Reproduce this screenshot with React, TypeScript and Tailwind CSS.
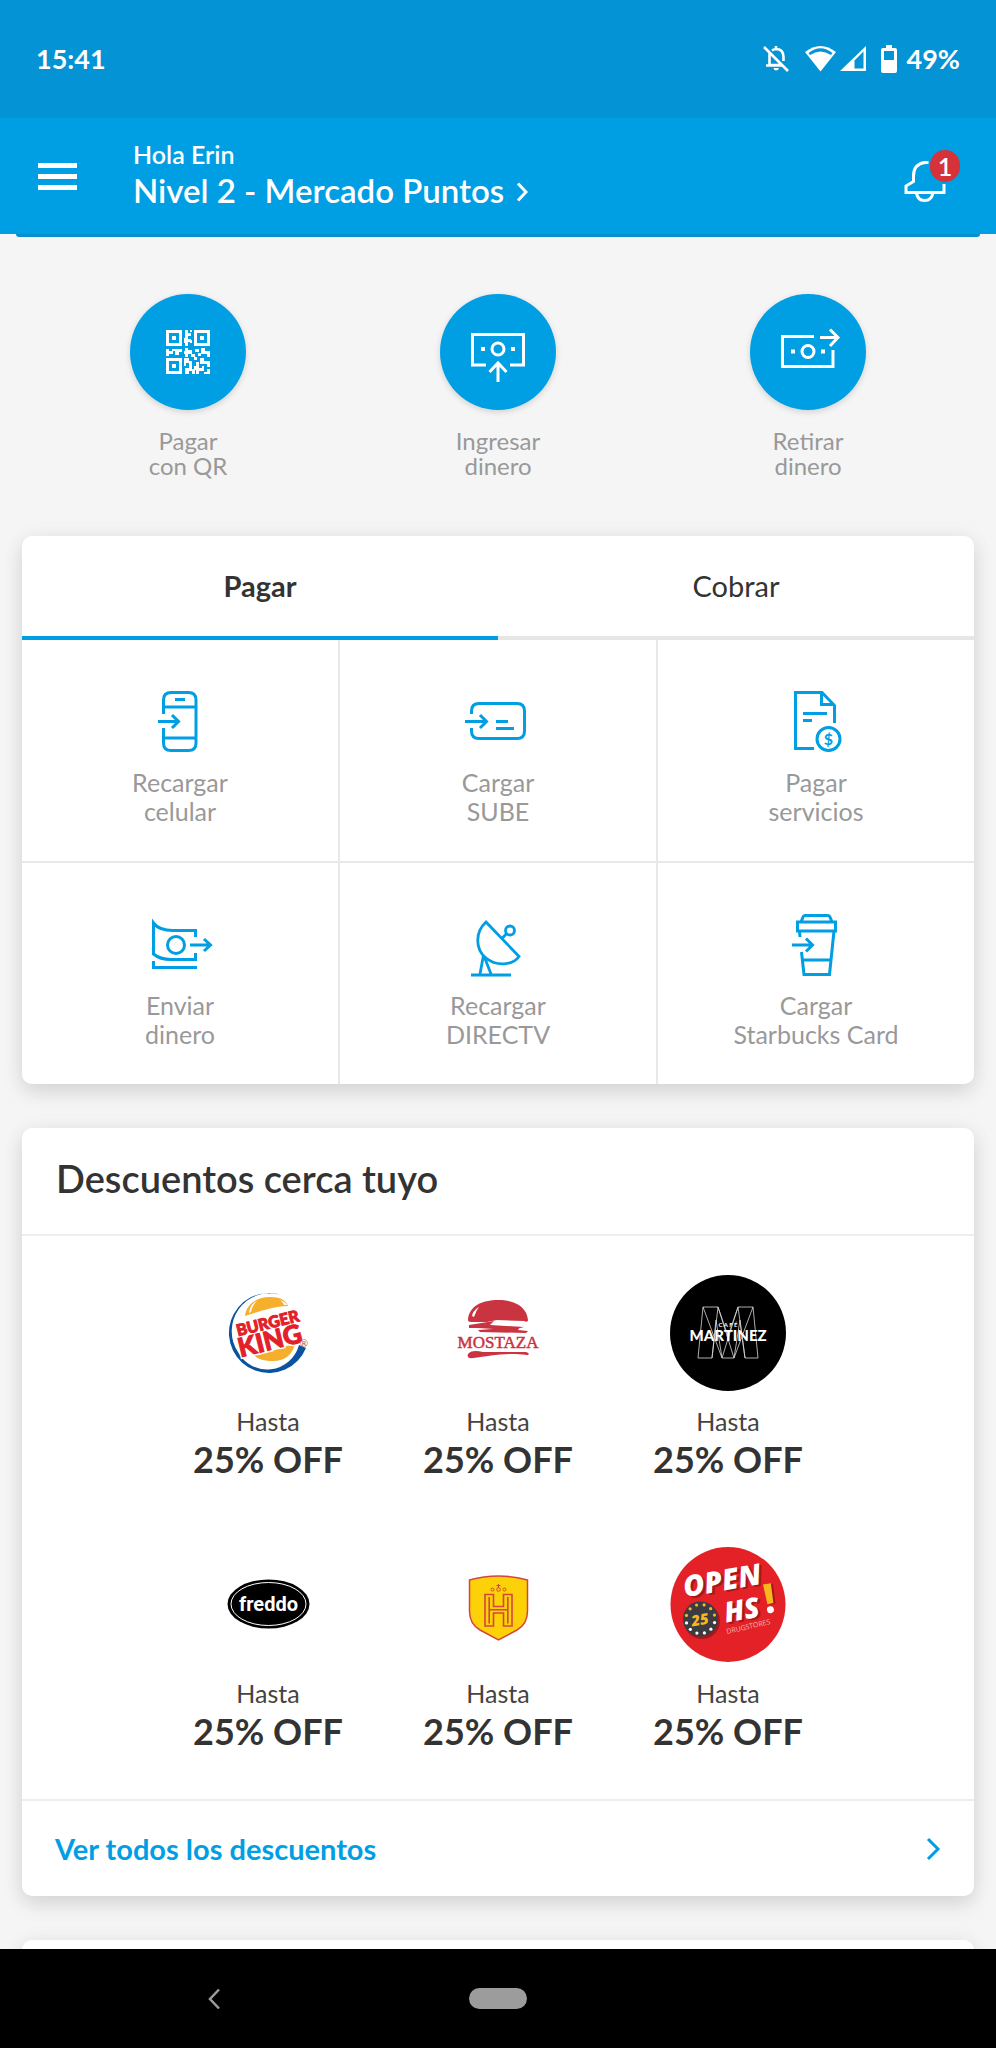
import { useState } from "react";
import type { ReactNode } from "react";

const QrIcon = () => (
    <svg width="64" height="64" viewBox="0 0 64 64" fill="currentColor">
        {[[10, 10], [38, 10], [10, 38]].map(([x, y]) => (
            <g key={`${x}-${y}`}>
                <rect x={x + 1.5} y={y + 1.5} width="13" height="13" fill="none" stroke="currentColor" strokeWidth="3" />
                <rect x={x + 6} y={y + 6} width="4" height="4" />
            </g>
        ))}
        <path d="M29 10h3v3h3v3h-3v3h3v3h-3v4h-3v-3h-1v-5h1zM34 10h2v2h-2zM34 20h2v3h-2zM10 29h3v2h3v-2h3v2h-2v3h-4v2h-3zM19 29h7v3h-3v3h-4v-3zM29 28h3v2h4v4h3v3h-4v-3h-3v3h-3v-3h-1v-3h1zM39 29h4v3h-4zM45 28h4v3h5v6h-3v-3h-6zM42 33h3v3h-3zM28 38h5v3h3v4h-3v-2h-3v3h-2zM38 37h3v3h-3zM44 38h4v3h6v6h-3v-3h-7zM29 48h4v-3h3v4h3v5h-3v-3h-3v3h-4zM40 42h3v4h5v5h-5v3h-3v-4h-2v-4h2zM51 49h3v5h-6v-2h3z" />
        <rect x="43" y="45" width="3" height="3" fill="#009ee3" />
    </svg>
);

const DepositIcon = () => (
    <svg width="64" height="64" viewBox="0 0 64 64" fill="none" stroke="currentColor" strokeWidth="3">
        <path d="M20 45H6.500V14.500H57.500V45H44M32 62V44M23.500 52L32 43L40.500 52" />
        <circle cx="32" cy="29" r="6" />
        <path d="M15 29h4M45 29h4" strokeWidth="4" />
    </svg>
);

const WithdrawIcon = () => (
    <svg width="64" height="64" viewBox="0 0 64 64" fill="none" stroke="currentColor" strokeWidth="3">
        <path d="M38 16.500H6.500V46.500H57V30M44 17.500H62M54 9.500L62 17.500L54 26" />
        <circle cx="32" cy="31.500" r="6" />
        <path d="M15 31.500h4M45 31.500h4" strokeWidth="4" />
    </svg>
);

const LineIcon = ({ children }: { children: ReactNode }) => (
    <svg width="64" height="64" viewBox="0 0 64 64" fill="none" stroke="currentColor" strokeWidth="3" className="overflow-visible text-[#009ee3]">
        {children}
    </svg>
);

const quickActions = [
    { icon: QrIcon, lines: ["Pagar", "con QR"] },
    { icon: DepositIcon, lines: ["Ingresar", "dinero"] },
    { icon: WithdrawIcon, lines: ["Retirar", "dinero"] },
];

const services = [
    {
        lines: ["Recargar", "celular"],
        icon: (
            <LineIcon>
                <path d="M15.500 24V10Q15.500 2.500 23 2.500H40.500Q48 2.500 48 10V53Q48 60.500 40.500 60.500H23Q15.500 60.500 15.500 53V38M15.500 17H48M15.500 48H48M27 9.500H37M10 31.500H30M24 25L30.500 31.500L24 38" />
            </LineIcon>
        ),
    },
    {
        lines: ["Cargar", "SUBE"],
        icon: (
            <LineIcon>
                <path d="M5.500 24V21Q5.500 13.500 13 13.500H51Q58.500 13.500 58.500 21V41Q58.500 48.500 51 48.500H13Q5.500 48.500 5.500 41V38M-1 31.500H20M14 25L20.500 31.500L14 38M30 31.500H42M30 38.500H48" />
            </LineIcon>
        ),
    },
    {
        lines: ["Pagar", "servicios"],
        icon: (
            <LineIcon>
                <path d="M50.500 33V15.500L38 2.500H11.500V58.500H30M37.500 3V14.500H50M19 23.500H43M19 30.500H28" />
                <circle cx="44.500" cy="49" r="11.500" />
                <text x="44.500" y="55" textAnchor="middle" fontSize="16" fontWeight="700" fill="currentColor" stroke="none">$</text>
            </LineIcon>
        ),
    },
    {
        lines: ["Enviar", "dinero"],
        icon: (
            <LineIcon>
                <path d="M47.500 24V17.500H25Q11 17.500 5.500 10V41Q12 46.500 23 46.500H47.500V40M5.500 48V54.500H49M42 32H62M56 26L62.500 32L56 38" />
                <circle cx="28" cy="32" r="8.500" />
            </LineIcon>
        ),
    },
    {
        lines: ["Recargar", "DIRECTV"],
        icon: (
            <LineIcon>
                <path strokeWidth="2.800" d="M20 9C9 19 9 36 20 45C31 54 47 52 53 43.500ZM36.500 25L41 20M17.500 42L14 61M18 43L25 61M5 62H45" />
                <circle cx="44" cy="17.500" r="4.500" strokeWidth="2.800" />
            </LineIcon>
        ),
    },
    {
        lines: ["Cargar", "Starbucks Card"],
        icon: (
            <LineIcon>
                <path d="M17 9L19 4Q19.500 2.500 21 2.500H44Q45.500 2.500 46 4L48 9M13.500 9H51.500V18H13.500ZM15.500 18L16 24M17.500 39L20 61.500H45.500L50 18M18 47H48M8 32H28M22 25.500L28.500 32L22 38.500" />
            </LineIcon>
        ),
    },
];

const BurgerKingLogo = () => (
    <svg width="116" height="116" viewBox="0 0 116 116">
        <path d="M70 19.500A40 40 0 1 0 96 73L89 70A33 33 0 0 1 28 77A38 38 0 0 1 70 19.500Z" fill="#0a53a1" />
        <path d="M35 41C36 29 47 22 60 22C70 22 76 25 78 31C66 31 50 36 35 41Z" fill="#f6ae2d" />
        <path d="M43 79C57 78 73 74 85 67C84 79 75 86 63 86C54 86 47 84 43 79Z" fill="#f6ae2d" />
        <path d="M39 38C40 31 43 28 47 26C42 31 42 34 41 37ZM70 25C74 26 76 28 77 30L74 30C73 28 72 26 70 25Z" fill="#fff" />
        <g transform="rotate(-14 58 58)" fontFamily="Lato, sans-serif" fontWeight="900" textAnchor="middle" fill="#e3202a">
            <g stroke="#fff" strokeWidth="4">
                <text x="60" y="54" fontSize="16" aria-hidden="true">BURGER</text>
                <text x="58" y="75" fontSize="26" aria-hidden="true">KING</text>
            </g>
            <g stroke="#e3202a" strokeWidth="1">
                <text x="60" y="54" fontSize="16">BURGER</text>
                <text x="58" y="75" fontSize="26">KING</text>
            </g>
        </g>
        <text x="94" y="72" textAnchor="middle" fontSize="10" fill="#93605f">®</text>
    </svg>
);

const MostazaLogo = () => (
    <svg width="116" height="116" viewBox="0 0 116 116" fill="#c93440">
        <path d="M28 45C29 31 42 25 58 25C75 25 87 32 88 45C88 47 86 47 84 46L57 45L47 47L31 47C29 47 28 46 28 45Z" />
        <path d="M29 50L54 46L50 50L84 52L72 55L38 53L29 53ZM38 55L80 52L78 55L88 56L86 58L40 57Z" />
        <path d="M28 79C32 75 37 76 43 77L86 77C90 78 89 80 87 80C65 77 50 81 33 83C28 84 27 81 28 79Z" />
        <path d="M32 41C33 36 36 34 39 32C36 36 36 38 34 42Z" fill="#fff" />
        <text x="58" y="73" textAnchor="middle" fontFamily="Liberation Serif, serif" fontSize="17" stroke="#c93440" strokeWidth="0.500">MOSTAZA</text>
    </svg>
);

const MartinezLogo = () => (
    <svg width="116" height="116" viewBox="0 0 116 116">
        <circle cx="58" cy="58" r="58" />
        <path d="M33 32H48L58 61L68 32H83L88 83H75L70 45L64 83H52L46 45L42 83H28ZM33 32L52 83M48 32L42 83M48 32L64 83M68 32L52 83M68 32L75 83M83 32L64 83" fill="none" stroke="#d8d8d8" strokeWidth="0.800" />
        <text x="58" y="52" textAnchor="middle" fontFamily="Lato, sans-serif" fontWeight="700" fontSize="6" fill="#fff">C A F É</text>
        <text x="58" y="66" textAnchor="middle" fontFamily="Lato, sans-serif" fontWeight="900" fontSize="15" fill="#fff">MARTINEZ</text>
    </svg>
);

const FreddoLogo = () => (
    <svg width="116" height="116" viewBox="0 0 116 116">
        <ellipse cx="58.500" cy="57" rx="41" ry="24.500" />
        <ellipse cx="58.500" cy="57" rx="37.500" ry="21.500" fill="none" stroke="#fff" strokeWidth="1" />
        <text x="58.500" y="64" textAnchor="middle" fontFamily="Roboto, sans-serif" fontWeight="700" fontSize="20" fill="#fff">freddo</text>
    </svg>
);

const ShieldLogo = () => (
    <svg width="116" height="116" viewBox="0 0 116 116" fill="none" stroke="#d5453f">
        <path d="M29.500 33Q44 29 58.500 29Q73 29 87.500 33V64Q87.500 77 77 83L58.500 93L40 83Q29.500 77 29.500 64Z" fill="#fdd108" strokeWidth="1.500" />
        <path d="M45 47.500H53.500V59.500H63.500V47.500H72V79H63.500V66H53.500V79H45Z" strokeWidth="1.600" />
        <path d="M49.200 50V76.500M67.800 50V76.500M49.200 62.800H67.800" strokeWidth="1.600" />
        <circle cx="52.500" cy="42.500" r="1.500" />
        <circle cx="58.500" cy="42.500" r="1.800" />
        <circle cx="64.500" cy="42.500" r="1.500" />
        <path d="M58.500 37V41M56.500 38.500H60.500" />
    </svg>
);

const OpenLogo = () => (
    <svg width="116" height="116" viewBox="0 0 116 116" fontFamily="Open Sans, Lato, sans-serif">
        <circle cx="58" cy="57.500" r="57.500" fill="#e32126" />
        <circle cx="32" cy="74" r="18" fill="#a5181c" />
        <circle cx="30.500" cy="72" r="17.500" fill="#3b3c42" />
        {Array.from({ length: 12 }, (_, i) => {
            const angle = (i * Math.PI) / 6 + 0.25;
            return (
                <circle
                    key={i}
                    cx={30.5 + 14.5 * Math.cos(angle)}
                    cy={72 + 14.5 * Math.sin(angle)}
                    r="1.600"
                    fill={i < 6 ? "#fff" : "#f5b52a"}
                />
            );
        })}
        <g transform="rotate(-10 58 58)" fontWeight="800" fontStyle="italic">
            <g fill="#a5181c" aria-hidden="true">
                <text x="19" y="45" fontSize="29">OPEN</text>
                <text x="55" y="77" fontSize="28">HS</text>
                <path d="M98 45H106L105 65H99Z" />
            </g>
            <g fill="#fff">
                <text x="17" y="43" fontSize="29">OPEN</text>
                <text x="53" y="75" fontSize="28">HS</text>
                <path d="M96 44H104L103 64H97Z" fill="#f8b81c" />
                <circle cx="99" cy="70" r="3.500" />
            </g>
            <text x="19" y="73" fontSize="15" fill="#f8b81c">25</text>
        </g>
        <text x="57" y="87" fontSize="7" fill="#f2b9b5" transform="rotate(-13 57 87)">DRUGSTORES</text>
    </svg>
);

const discounts = [
    { name: "Burger King", logo: BurgerKingLogo },
    { name: "Mostaza", logo: MostazaLogo },
    { name: "Café Martínez", logo: MartinezLogo },
    { name: "Freddo", logo: FreddoLogo },
    { name: "Havanna", logo: ShieldLogo },
    { name: "Open 25 HS", logo: OpenLogo },
];

const cardClass = "mx-[22px] overflow-hidden rounded-[10px] bg-white shadow-[0_8px_20px_rgba(0,0,0,0.12),0_0_24px_rgba(0,0,0,0.04)]";

const StatusBar = () => (
    <div className="flex h-[118px] shrink-0 items-center justify-between bg-[#0493d5] px-9 text-[27px] font-bold text-white">
        <span>15:41</span>
        <div className="flex items-center">
            <svg width="26" height="28" viewBox="0 0 26 28" fill="none" stroke="currentColor" strokeWidth="2.600" className="mr-4">
                <path d="M1 2L25 26M6.500 8.500V20H19M3 20.500H20M9 5.500Q11 4 13.500 4Q20.500 4.500 20.500 12V16M13 1V4" />
                <path d="M10.500 23H16Q15.500 25.500 13 25.500Q11 25.500 10.500 23Z" fill="currentColor" stroke="none" />
            </svg>
            <svg width="31" height="28" viewBox="0 0 31 28" className="mr-1">
                <path d="M0 7Q15.500 -5 31 7L15.500 26.500Z" fill="currentColor" />
                <path d="M3.500 8Q15.500 -1.500 27.500 8L26 10Q15.500 3 5 10Z" fill="#0493d5" />
            </svg>
            <svg width="26" height="28" viewBox="0 0 26 28" className="mr-[15px]">
                <path d="M0 26L26 1V26Z" fill="currentColor" />
                <path d="M14.500 15.500L23.500 6.500V23.500H14.500Z" fill="#0493d5" />
            </svg>
            <svg width="16" height="28" viewBox="0 0 16 28" className="mr-[10px]">
                <path d="M5 0H11V3H14Q16 3 16 5V26Q16 28 14 28H2Q0 28 0 26V5Q0 3 2 3H5Z" fill="currentColor" />
                <path d="M3 6H13V15H3Z" fill="#0493d5" />
            </svg>
            <span>49%</span>
        </div>
    </div>
);

const Header = () => (
    <header className="shrink-0 text-white">
        <div className="flex h-[116px] items-center bg-[#009ee3] pr-9 pl-[38px]">
            <button type="button" aria-label="Menú" className="mr-14 flex w-[39px] flex-col gap-1.5">
                <span className="h-[5px] w-full bg-white" />
                <span className="h-[5px] w-full bg-white" />
                <span className="h-[5px] w-full bg-white" />
            </button>
            <a href="#puntos" className="flex flex-col gap-0.5 pb-0.5 font-semibold">
                <span className="text-[25px] leading-7">Hola Erin</span>
                <span className="flex items-center gap-3 text-[33px] leading-10">
                    Nivel 2 - Mercado Puntos
                    <svg width="12" height="20" viewBox="0 0 12 20" fill="none" stroke="currentColor" strokeWidth="3" className="mt-1">
                        <path d="M2 1.500L10 10L2 18.500" />
                    </svg>
                </span>
            </a>
            <button type="button" aria-label="Notificaciones" className="relative ml-auto h-[52px] w-14">
                <svg width="42" height="52" viewBox="0 0 42 52" fill="none" stroke="currentColor" strokeWidth="3">
                    <path d="M24.500 12.500H21Q9.500 14 9.500 26V31.500L2 36V42.500H40V34M12.500 43Q13.500 50.500 20.500 50.500Q27.500 50.500 29 43" />
                </svg>
                <span className="absolute top-0 right-0 flex h-8 w-[30px] items-center justify-center rounded-full bg-[#d5323a] text-[25px] leading-7 font-semibold">1</span>
            </button>
        </div>
        <div className="mx-4 h-[3px] rounded-b-full bg-[#088fd0]" />
    </header>
);

export default function App() {
    const [tab, setTab] = useState("Pagar");

    return (
        <div className="flex h-screen flex-col bg-[#f5f5f5] font-['Lato',sans-serif] text-[#333]">
            <StatusBar />
            <Header />

            <main className="flex-1 overflow-hidden">
                <nav className="grid grid-cols-3 px-[33px] pt-[57px] pb-[58px]">
                    {quickActions.map((action) => (
                        <button key={action.lines.join(" ")} type="button" className="flex flex-col items-center text-2xl leading-[25px] text-[#999]">
                            <span className="mb-[18px] flex h-[116px] w-[116px] items-center justify-center rounded-full bg-[#009ee3] text-white shadow-[0_2px_6px_rgba(0,0,0,0.15)]">
                                <action.icon />
                            </span>
                            {action.lines.map((line) => (
                                <span key={line}>{line}</span>
                            ))}
                        </button>
                    ))}
                </nav>

                <section className={cardClass}>
                    <div role="tablist" className="grid grid-cols-2">
                        {["Pagar", "Cobrar"].map((name) => (
                            <button
                                key={name}
                                type="button"
                                role="tab"
                                aria-selected={tab === name}
                                onClick={() => setTab(name)}
                                className={`h-[104px] border-b-4 text-[29px] ${tab === name ? "border-[#009ee3] font-bold" : "border-[#e6e6e6]"}`}
                            >
                                {name}
                            </button>
                        ))}
                    </div>
                    <div className="grid grid-cols-3 gap-0.5 bg-[#e8e8e8]">
                        {services.map((service) => (
                            <button
                                key={service.lines.join(" ")}
                                type="button"
                                className="flex h-[221px] flex-col items-center bg-white pt-[50px] text-[25px] leading-[29px] text-[#999]"
                            >
                                <span className="mb-3.5">{service.icon}</span>
                                {service.lines.map((line) => (
                                    <span key={line}>{line}</span>
                                ))}
                            </button>
                        ))}
                    </div>
                </section>

                <section className={`mt-11 ${cardClass}`}>
                    <h2 className="flex h-[108px] items-center border-b-2 border-[#eee] px-[34px] pb-1.5 text-[38px] font-semibold">
                        Descuentos cerca tuyo
                    </h2>
                    <ul className="mx-auto grid max-w-[690px] grid-cols-3 gap-y-[68px] pt-[39px] pb-12">
                        {discounts.map((item) => (
                            <li key={item.name} className="flex flex-col items-center" aria-label={item.name}>
                                <item.logo />
                                <span className="mt-4 text-[25px] leading-7 text-[#444]">Hasta</span>
                                <span className="mt-1 text-[36px] leading-10 font-bold">25% OFF</span>
                            </li>
                        ))}
                    </ul>
                    <a href="#descuentos" className="flex h-[97px] items-center justify-between border-t-2 border-[#eee] px-[33px] text-[29px] font-bold text-[#009ee3]">
                        Ver todos los descuentos
                        <svg width="16" height="24" viewBox="0 0 16 24" fill="none" stroke="currentColor" strokeWidth="3">
                            <path d="M3 2L13 12L3 22" />
                        </svg>
                    </a>
                </section>

                <section className={`mt-11 h-40 ${cardClass}`} />
            </main>

            <footer className="relative flex h-[99px] shrink-0 items-center justify-center bg-black">
                <button type="button" aria-label="Atrás" className="absolute left-[207px] text-[#9c9c9c]">
                    <svg width="14" height="22" viewBox="0 0 14 22" fill="none" stroke="currentColor" strokeWidth="2.500">
                        <path d="M12 1.500L3 11L12 20.500" />
                    </svg>
                </button>
                <button type="button" aria-label="Inicio" className="h-[21px] w-[58px] rounded-full bg-[#9c9c9c]" />
            </footer>
        </div>
    );
}
